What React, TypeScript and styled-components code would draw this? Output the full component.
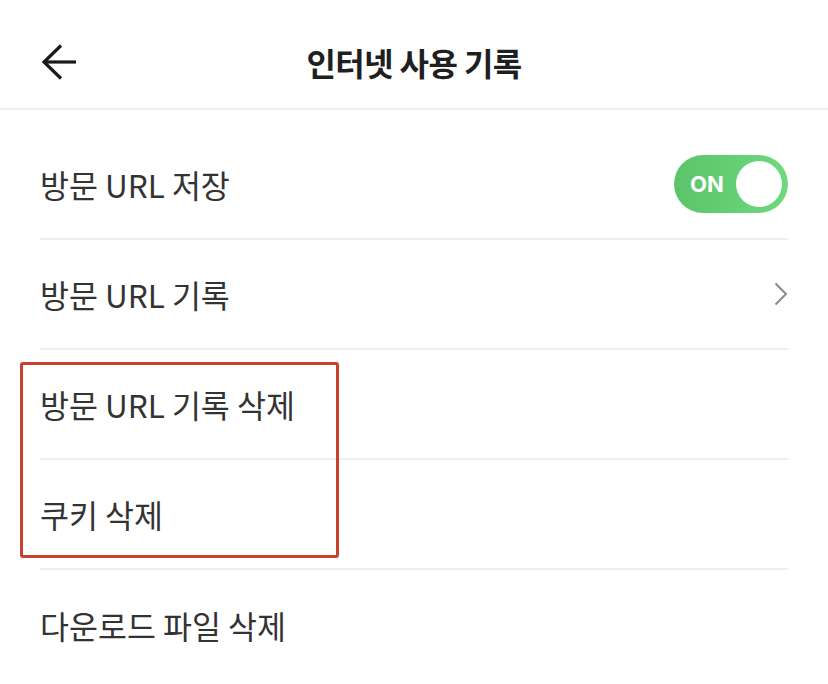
import React from "react";
import styled, { createGlobalStyle } from "styled-components";

const GlobalStyle = createGlobalStyle`
  html, body { margin: 0; padding: 0; background: #fff; }
  body {
    font-family: "Noto Sans CJK KR", "Noto Sans", sans-serif;
    color: #333;
    -webkit-font-smoothing: antialiased;
  }
  * { box-sizing: border-box; }
`;

const Page = styled.div`
  width: 828px;
  height: 684px;
  overflow: hidden;
  background: #fff;
`;

const Header = styled.header`
  position: relative;
  height: 110px;
  padding-top: 16px;
  display: flex;
  align-items: center;
  justify-content: center;
  border-bottom: 2px solid #eeeeee;
`;

const BackButton = styled.button`
  position: absolute;
  left: 40px;
  top: 43px;
  width: 38px;
  height: 38px;
  padding: 0;
  border: none;
  background: none;
  display: flex;
  align-items: center;
  justify-content: center;
`;

const Title = styled.h1`
  margin: 0;
  font-size: 32px;
  font-weight: 700;
  color: #1f1f1f;
  letter-spacing: -0.6px;
`;

const List = styled.ul`
  position: relative;
  list-style: none;
  margin: 0;
  padding: 20px 0 0;
`;

const Row = styled.li`
  margin: 0 40px;
  height: 110px;
  display: flex;
  align-items: center;
  justify-content: space-between;
  border-bottom: 2px solid #eeeeee;
  &:last-of-type { border-bottom: none; }
`;

const Label = styled.span`
  font-size: 31.5px;
  font-weight: 400;
  color: #333;
  letter-spacing: 0;
`;

const Toggle = styled.div`
  width: 114px;
  height: 58px;
  border-radius: 29px;
  background: linear-gradient(90deg, #5bc46b 0%, #6ed97e 100%);
  display: flex;
  align-items: center;
  justify-content: space-between;
  padding: 0 6px 0 16px;
`;

const ToggleText = styled.span`
  font-family: "Inter", "Noto Sans", sans-serif;
  font-size: 22px;
  font-weight: 700;
  color: #fff;
`;

const Knob = styled.span`
  width: 46px;
  height: 46px;
  border-radius: 50%;
  background: #fff;
`;

const Highlight = styled.div`
  position: absolute;
  left: 20px;
  top: 252px;
  width: 319px;
  height: 196px;
  border: 3px solid #c9412c;
  border-radius: 3px;
  pointer-events: none;
`;

const items = ["방문 URL 기록 삭제", "쿠키 삭제", "다운로드 파일 삭제"];

export default function App() {
  return (
    <>
      <GlobalStyle />
      <Page>
        <Header>
          <BackButton aria-label="뒤로">
            <svg width="38" height="38" viewBox="0 0 38 38" fill="none">
              <path d="M36 19H4" stroke="#1a1a1a" strokeWidth="3.2" />
              <path d="M21 2.5L4 19L21 35.5" stroke="#1a1a1a" strokeWidth="3.2" strokeLinejoin="miter" />
            </svg>
          </BackButton>
          <Title>인터넷 사용 기록</Title>
        </Header>
        <List>
          <Row>
            <Label>방문 URL 저장</Label>
            <Toggle>
              <ToggleText>ON</ToggleText>
              <Knob />
            </Toggle>
          </Row>
          <Row>
            <Label>방문 URL 기록</Label>
            <svg width="14" height="24" viewBox="0 0 14 24" fill="none">
              <path d="M1.5 1.5L12 12L1.5 22.5" stroke="#8a8a8a" strokeWidth="2" />
            </svg>
          </Row>
          {items.map((t) => (
            <Row key={t}>
              <Label>{t}</Label>
            </Row>
          ))}
          <Highlight />
        </List>
      </Page>
    </>
  );
}
